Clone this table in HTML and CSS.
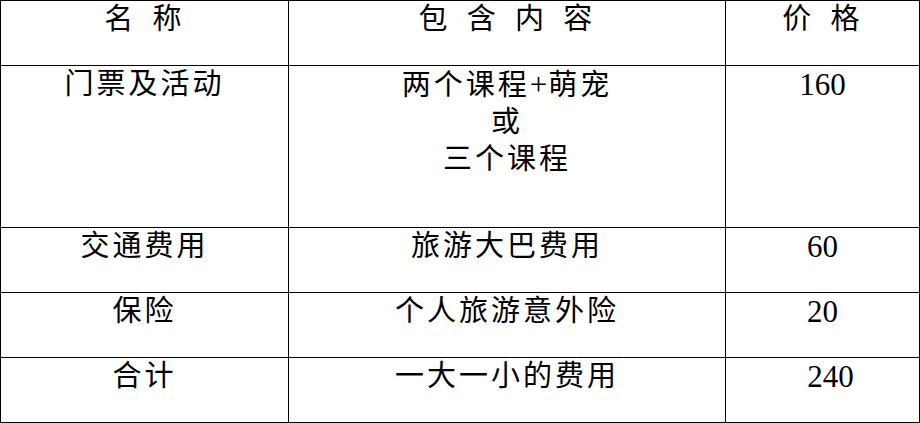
FILE: index.html
```html
<!DOCTYPE html>
<html lang="zh-CN">
<head>
<meta charset="utf-8">
<title>费用</title>
<link rel="stylesheet" href="styles.css">
</head>
<body>
<div class="price-table">
  <div class="cell head">名 称</div>
  <div class="cell head">包 含 内 容</div>
  <div class="cell head">价 格</div>

  <div class="cell">门票及活动</div>
  <div class="cell">两个课程<span class="plus">+</span>萌宠<br>或<br>三个课程</div>
  <div class="cell num">160</div>

  <div class="cell">交通费用</div>
  <div class="cell">旅游大巴费用</div>
  <div class="cell num">60</div>

  <div class="cell">保险</div>
  <div class="cell">个人旅游意外险</div>
  <div class="cell num">20</div>

  <div class="cell">合计</div>
  <div class="cell">一大一小的费用</div>
  <div class="cell num total">240</div>
</div>
</body>
</html>
```
FILE: styles.css
```css
html, body {
  margin: 0;
  padding: 0;
  background: #fff;
}

.price-table {
  display: grid;
  grid-template-columns: 288px 437px 194px;
  grid-template-rows: 65px 162px 65px 65px 65px;
  width: 920px;
  box-sizing: border-box;
  border-left: 1px solid #000;
  border-top: 1px solid #000;
  color: #000;
  font-family: "Liberation Serif", "Noto Sans CJK SC", serif;
  font-size: 29px;
  line-height: 37px;
}

.cell {
  border-right: 1px solid #000;
  border-bottom: 1px solid #000;
  text-align: center;
  letter-spacing: 3px;
  padding-top: 0;
}

.head {
  word-spacing: 6px;
}

.plus {
  font-size: 31px;
  letter-spacing: 1px;
}

.num {
  font-size: 31px;
  letter-spacing: 0;
  padding-top: 0;
}

.total {
  padding-left: 16px;
}
```
